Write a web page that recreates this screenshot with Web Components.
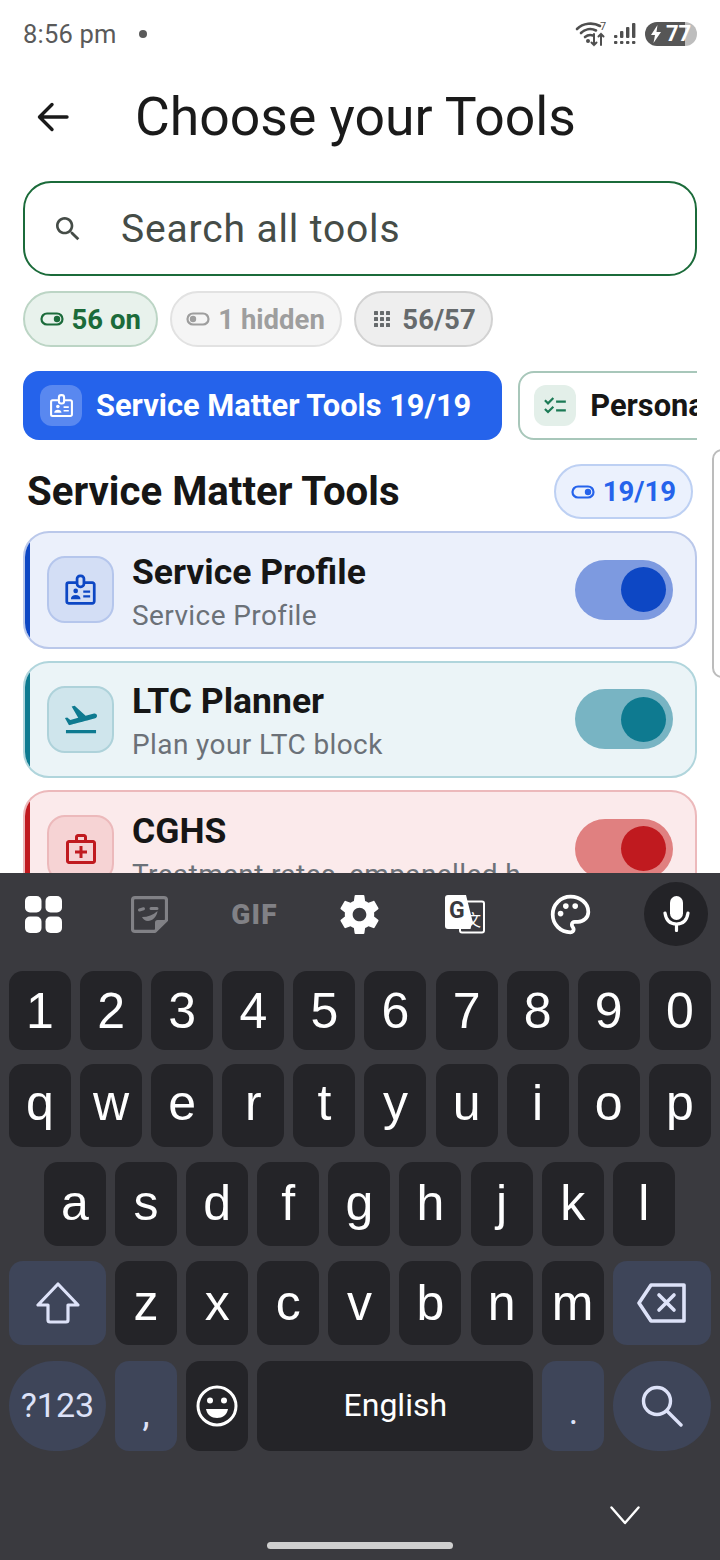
<!DOCTYPE html>
<html lang="en">
<head>
<meta charset="utf-8">
<title>Choose your Tools</title>
<style>
  html,body{margin:0;padding:0;background:#fff;}
  body{width:720px;height:1560px;overflow:hidden;font-family:Roboto,"Liberation Sans",sans-serif;}
</style>
</head>
<body>
<tools-screen></tools-screen>
<script>
  // material icon paths, 24 grid
  const ICONS = {
    flight:'<path fill="currentColor" d="M2.5 19h19v2h-19v-2zm19.57-9.36c-.21-.8-1.04-1.28-1.84-1.06L14.92 10l-6.9-6.43-1.93.51 4.14 7.17-4.97 1.33-1.97-1.54-1.45.39 2.59 4.49s7.12-1.9 16.57-4.43c.81-.23 1.28-1.05 1.07-1.85z"/>',
    medical:'<path fill="currentColor" d="M20 6h-4V4c0-1.1-.9-2-2-2h-4c-1.1 0-2 .9-2 2v2H4c-1.1 0-2 .9-2 2v12c0 1.1.9 2 2 2h16c1.1 0 2-.9 2-2V8c0-1.1-.9-2-2-2zM10 4h4v2h-4V4zm10 16H4V8h16v12z"/><path fill="currentColor" d="M13 10h-2v3H8v2h3v3h2v-3h3v-2h-3z"/>',
    checklist:'<path fill="currentColor" d="M22 7h-9v2h9V7zm0 8h-9v2h9v-2zM5.54 11 2 7.46l1.41-1.41 2.12 2.12 4.24-4.24 1.41 1.41L5.54 11zm0 8L2 15.46l1.41-1.41 2.12 2.12 4.24-4.24 1.41 1.41L5.54 19z"/>',
    badge:'<path fill="none" stroke="currentColor" stroke-width="2" stroke-linejoin="round" d="M9.5 7H3.4A1.4 1.4 0 0 0 2 8.4v12.2A1.4 1.4 0 0 0 3.4 22h17.2a1.4 1.4 0 0 0 1.4-1.4V8.4A1.4 1.4 0 0 0 20.600 7H14.500"/><rect x="9.500" y="2" width="5" height="8" rx="2.200" fill="none" stroke="currentColor" stroke-width="2"/><circle cx="8.500" cy="13" r="1.700" fill="currentColor"/><path fill="currentColor" d="M5 19c0-2 1.600-3 3.500-3s3.500 1 3.500 3z"/><path stroke="currentColor" stroke-width="1.600" d="M14 13.500h5M14 17h5"/>',
    search:'<path fill="currentColor" d="M15.5 14h-.79l-.28-.27C15.41 12.59 16 11.11 16 9.5 16 5.91 13.09 3 9.5 3S3 5.91 3 9.5 5.91 16 9.5 16c1.61 0 3.09-.59 4.23-1.57l.27.28v.79l5 4.99L20.49 19l-4.99-5zm-6 0C7.01 14 5 11.99 5 9.5S7.01 5 9.5 5 14 7.01 14 9.5 11.99 14 9.5 14z"/>',
    toggleOn:'<rect x="1.500" y="6.500" width="21" height="11" rx="5.500" fill="none" stroke="currentColor" stroke-width="2.200"/><circle cx="17" cy="12" r="3.200" fill="currentColor"/>',
    toggleOff:'<rect x="1.500" y="6.500" width="21" height="11" rx="5.500" fill="none" stroke="currentColor" stroke-width="2.200"/><circle cx="7" cy="12" r="3.200" fill="currentColor"/>',
    apps:'<g fill="currentColor"><rect x="4" y="4" width="4" height="4" rx=".6"/><rect x="10" y="4" width="4" height="4" rx=".6"/><rect x="16" y="4" width="4" height="4" rx=".6"/><rect x="4" y="10" width="4" height="4" rx=".6"/><rect x="10" y="10" width="4" height="4" rx=".6"/><rect x="16" y="10" width="4" height="4" rx=".6"/><rect x="4" y="16" width="4" height="4" rx=".6"/><rect x="10" y="16" width="4" height="4" rx=".6"/><rect x="16" y="16" width="4" height="4" rx=".6"/></g>'
  };
  const svg = (name,size) => `<svg width="${size}" height="${size}" viewBox="0 0 24 24" style="display:block;flex:none">${ICONS[name]}</svg>`;

  class StatusBar extends HTMLElement{
    constructor(){ super(); this.attachShadow({mode:'open'}); }
    connectedCallback(){
      this.shadowRoot.innerHTML=`
        <style>
          :host{display:flex;align-items:center;height:66px;padding:2px 23px 0 23px;color:#5a5a5a;box-sizing:border-box;}
          .time{font-size:25.500px;letter-spacing:.2px;line-height:64px;}
          .dot{width:8px;height:8px;border-radius:50%;background:#5a5a5a;margin-left:22px;}
          .right{margin-left:auto;display:flex;align-items:center;gap:6px;}
          .batt{width:52px;height:24px;border-radius:12px;overflow:hidden;background:linear-gradient(90deg,#565656 0 40px,#bdbdbd 40px);display:flex;align-items:center;color:#fff;font-weight:700;font-size:22px;margin-left:3px;}
          .batt svg{margin-left:5px;}
          .batt span{margin-left:4px;line-height:24px;}
        </style>
        <span class="time">8:56 pm</span><span class="dot"></span>
        <div class="right">
          <svg width="32" height="28" viewBox="0 0 32 28" fill="none" stroke="#4f4f4f" stroke-linecap="round">
            <path d="M2 9C8 3 18 2 25 6" stroke-width="2.600"/>
            <path d="M6 13c4-4 10-5 15-2.500" stroke-width="2.600"/>
            <path d="M10 17c2.500-2 5-2.500 8-1.500" stroke-width="2.600"/>
            <circle cx="13" cy="21" r="2" fill="#4f4f4f" stroke="none"/>
            <path d="M19 14v11m-2.500-2.500L19 25l2.500-2.500M26 25V14m-2.500 2.500L26 14l2.500 2.500" stroke-width="2"/>
            <text x="25" y="10" font-size="11" fill="#4f4f4f" stroke="none" font-family="Roboto">7</text>
          </svg>
          <svg width="23" height="24" viewBox="0 0 23 24" fill="#4f4f4f">
            <rect x="1" y="13" width="3.400" height="3" rx="1"/><rect x="7" y="9" width="3.400" height="7" rx="1"/><rect x="13" y="5" width="3.400" height="11" rx="1"/><rect x="19" y="1" width="3.400" height="15" rx="1"/>
            <rect x="1" y="19" width="3.400" height="3" rx="1"/><rect x="7" y="19" width="3.400" height="3" rx="1"/><rect x="13" y="19" width="3.400" height="3" rx="1"/><rect x="19" y="19" width="3.400" height="3" rx="1"/>
          </svg>
          <div class="batt">
            <svg width="12" height="18" viewBox="0 0 12 18"><path fill="#fff" d="M7.500 0 1 10h4l-1.500 8L11 7H6.500z"/></svg>
            <span>77</span>
          </div>
        </div>`;
    }
  }

  class AppHeader extends HTMLElement{
    constructor(){ super(); this.attachShadow({mode:'open'}); }
    connectedCallback(){
      this.shadowRoot.innerHTML=`
        <style>
          :host{display:flex;align-items:center;height:102px;box-sizing:border-box;padding-left:36px;color:#1a1a1a;}
          svg{flex:none;margin-right:65px;display:block;}
          h1{margin:0;font-weight:400;font-size:53.500px;line-height:102px;}
        </style>
        <svg width="34" height="32" viewBox="0 0 34 32" fill="none" stroke="#1a1a1a" stroke-width="3.400" stroke-linecap="round" stroke-linejoin="round"><path d="M31 16H4M16 3.500 3.500 16 16 28.500"/></svg>
        <h1><slot></slot></h1>`;
    }
  }

  class SearchBox extends HTMLElement{
    constructor(){ super(); this.attachShadow({mode:'open'}); }
    connectedCallback(){
      this.shadowRoot.innerHTML=`
        <style>
          :host{display:flex;align-items:center;height:95px;margin:13px 23px 0;box-sizing:border-box;border:2.500px solid #1b6b3a;border-radius:28px;background:#fff;color:#454c47;padding-left:27px;}
          span{font-size:39px;margin-left:37px;letter-spacing:.85px;}
        </style>
        ${svg('search',32)}
        <span>${this.getAttribute('placeholder')}</span>`;
    }
  }

  class StatChip extends HTMLElement{
    constructor(){ super(); this.attachShadow({mode:'open'}); }
    connectedCallback(){
      this.shadowRoot.innerHTML=`
        <style>
          :host{display:inline-flex;align-items:center;gap:8px;height:56px;box-sizing:border-box;border:2px solid var(--line);border-radius:28px;background:var(--bg);color:var(--fg);font-weight:700;font-size:27.500px;padding:0 15px 0 14.500px;white-space:nowrap;}
        </style>
        ${svg(this.getAttribute('icon'),24)}
        <span><slot></slot></span>`;
    }
  }

  class CategoryTab extends HTMLElement{
    constructor(){ super(); this.attachShadow({mode:'open'}); }
    connectedCallback(){
      const on = this.hasAttribute('active');
      this.shadowRoot.innerHTML=`
        <style>
          :host{flex:none;display:flex;align-items:center;gap:14px;height:69px;box-sizing:border-box;border-radius:16px;padding:0 ${on?'31px':'20px'} 0 ${on?'17px':'14px'};white-space:nowrap;font-weight:700;font-size:30.800px;
            background:${on?'#2563eb':'#fff'};color:${on?'#fff':'#161616'};border:${on?'0':'2px solid #a8c7ba'};}
          .tile{width:42px;height:41px;border-radius:12px;display:flex;align-items:center;justify-content:center;background:${on?'rgba(255,255,255,.24)':'#e3efe9'};color:${on?'#fff':'#1b7a55'};}
        </style>
        <div class="tile">${svg(this.getAttribute('icon'),on?25:26)}</div>
        <span><slot></slot></span>`;
    }
  }

  class SectionHead extends HTMLElement{
    constructor(){ super(); this.attachShadow({mode:'open'}); }
    connectedCallback(){
      this.shadowRoot.innerHTML=`
        <style>
          :host{display:flex;align-items:center;justify-content:space-between;height:55px;margin:24px 27px 0;color:#161616;}
          h2{margin:0;font-size:40.200px;font-weight:700;}
          stat-chip{--bg:#ebf1fd;--line:#bdd0f3;--fg:#2563eb;height:55px;}
        </style>
        <h2><slot></slot></h2>
        <stat-chip icon="toggleOn">${this.getAttribute('count')}</stat-chip>`;
    }
  }

  class ToolToggle extends HTMLElement{
    constructor(){ super(); this.attachShadow({mode:'open'}); }
    connectedCallback(){
      this.shadowRoot.innerHTML=`
        <style>
          :host{flex:none;display:flex;align-items:center;justify-content:flex-end;width:98px;height:60px;box-sizing:border-box;padding-right:7.500px;border-radius:30px;background:var(--track);}
          i{display:block;width:45px;height:45px;border-radius:50%;background:var(--accent);}
        </style>
        <i></i>`;
    }
  }

  class ToolCard extends HTMLElement{
    constructor(){ super(); this.attachShadow({mode:'open'}); }
    connectedCallback(){
      this.shadowRoot.innerHTML=`
        <style>
          :host{display:flex;align-items:center;height:117.500px;box-sizing:border-box;margin:0 23px;border:2px solid var(--line);border-radius:26px;background:var(--bg);padding-right:22px;overflow:hidden;}
          .bar{flex:none;align-self:stretch;width:5px;margin:8px 0;background:var(--accent);}
          .tile{flex:none;width:67px;height:67px;box-sizing:border-box;margin-left:17px;border:2px solid var(--tile-line);border-radius:18px;background:var(--tile);color:var(--accent);display:flex;align-items:center;justify-content:center;}
          .txt{flex:1;min-width:0;margin-left:18px;padding-top:6px;}
          .name{font-size:35.500px;font-weight:700;line-height:40px;color:#161616;}
          .sub{font-size:28px;line-height:36px;margin-top:6px;color:#6b7178;white-space:nowrap;overflow:hidden;text-overflow:ellipsis;margin-right:30px;letter-spacing:.4px;}
        </style>
        <div class="bar"></div>
        <div class="tile">${svg(this.getAttribute('icon'),this.getAttribute('size')||36)}</div>
        <div class="txt">
          <div class="name">${this.getAttribute('name')}</div>
          <div class="sub">${this.getAttribute('sub')}</div>
        </div>
        <tool-toggle></tool-toggle>`;
    }
  }

  class KbKey extends HTMLElement{
    constructor(){ super(); this.attachShadow({mode:'open'}); }
    connectedCallback(){
      const kind = this.getAttribute('kind') || '';
      const w = this.getAttribute('w') || 62;
      const fn = kind=='fn' || kind=='round';
      const letter = !this.hasAttribute('fs');
      this.shadowRoot.innerHTML=`
        <style>
          :host{flex:0 0 ${w}px;display:flex;align-items:center;justify-content:center;box-sizing:border-box;border-radius:${kind=='round'?'50px':'14px'};background:${fn?'#3e4559':'#242428'};color:${fn?'#dde2f8':'#fff'};font-size:${this.getAttribute('fs')||50}px;font-family:${letter?'"Liberation Sans"':'Roboto'},sans-serif;padding-bottom:${this.getAttribute('pb')||0}px;padding-top:${this.getAttribute('pt')||0}px;}
        </style>
        <slot></slot>`;
    }
  }

  class KbRow extends HTMLElement{
    constructor(){ super(); this.attachShadow({mode:'open'}); }
    connectedCallback(){
      this.shadowRoot.innerHTML=`
        <style>:host{display:flex;gap:9.100px;height:${this.getAttribute('h')}px;margin-top:${this.getAttribute('top')}px;padding-left:${this.getAttribute('pl')||9}px;}</style>
        <slot></slot>`;
    }
  }

  class KbToolbar extends HTMLElement{
    constructor(){ super(); this.attachShadow({mode:'open'}); }
    connectedCallback(){
      this.shadowRoot.innerHTML=`
        <style>
          :host{display:grid;grid-template-columns:repeat(7,105.400px);align-items:center;justify-items:center;height:82px;margin-left:-9px;width:738px;box-sizing:border-box;}
          .gif{font-family:Roboto,sans-serif;font-weight:900;font-size:28px;letter-spacing:1.200px;color:#818186;}
          .mic{width:64px;height:64px;border-radius:50%;background:#232327;display:flex;align-items:center;justify-content:center;}
        </style>
        <svg width="37" height="37" viewBox="0 0 37 37" fill="#fff"><rect x="0" y="0" width="16.500" height="16.500" rx="5"/><rect x="20.500" y="0" width="16.500" height="16.500" rx="5"/><rect x="0" y="20.500" width="16.500" height="16.500" rx="5"/><rect x="20.500" y="20.500" width="16.500" height="16.500" rx="5"/></svg>
        <svg width="37" height="37" viewBox="0 0 37 37" fill="none" stroke="#818186" stroke-width="3.200" stroke-linejoin="round"><path d="M4 1.600h29a2.500 2.500 0 0 1 2.500 2.500v20L24 35.400H4a2.500 2.500 0 0 1-2.500-2.500V4A2.500 2.500 0 0 1 4 1.600z"/><path fill="#818186" stroke="none" d="M35.500 24 24 35.400V26.500a2.500 2.500 0 0 1 2.500-2.500z"/><path stroke-linecap="round" stroke-width="3" d="M8.500 14l4-1.200M20 12.500h6"/><path fill="#818186" stroke="none" d="M11 21c6 0 11-2 15.500-6C26 21 21 25 17 25c-3 0-5-2-6-4z"/></svg>
        <span class="gif">GIF</span>
        <svg width="47" height="47" viewBox="0 0 24 24" fill="#fff"><path d="M19.430 12.980c.04-.32.07-.64.07-.98s-.03-.66-.07-.98l2.110-1.650c.19-.15.240-.42.120-.64l-2-3.460c-.12-.22-.39-.3-.61-.22l-2.490 1c-.52-.4-1.080-.73-1.690-.98l-.38-2.650C14.460 2.180 14.250 2 14 2h-4c-.25 0-.46.18-.49.42l-.38 2.650c-.61.25-1.170.59-1.690.98l-2.490-1c-.23-.09-.49 0-.61.22l-2 3.460c-.13.22-.07.490.12.640l2.110 1.650c-.04.32-.07.650-.07.980s.03.660.07.980l-2.110 1.650c-.19.150-.24.420-.12.640l2 3.460c.12.220.39.300.61.220l2.490-1c.52.400 1.080.730 1.690.980l.38 2.650c.03.240.24.420.49.420h4c.25 0 .46-.18.49-.42l.38-2.650c.61-.25 1.170-.59 1.690-.98l2.490 1c.23.090.49 0 .61-.22l2-3.460c.12-.22.07-.49-.12-.64l-2.110-1.650zM12 15.500c-1.930 0-3.500-1.570-3.500-3.500s1.570-3.500 3.500-3.500 3.500 1.570 3.500 3.500-1.570 3.500-3.500 3.500z"/></svg>
        <svg width="40" height="39" viewBox="0 0 40 39"><rect x="15" y="6.500" width="24" height="31" rx="2" fill="none" stroke="#fff" stroke-width="2"/><path fill="#fff" d="M3 0h18l6.500 26-2 8H3a3 3 0 0 1-3-3V3a3 3 0 0 1 3-3z"/><text x="4" y="23" font-size="23" font-weight="700" font-family="Roboto" fill="#3a3a3f">G</text><text x="20" y="31" font-size="16" font-family="'Noto Sans CJK SC',sans-serif" fill="#fff">文</text></svg>
        <svg width="45" height="45" viewBox="0 0 24 24"><path fill="none" stroke="#fff" stroke-width="2" stroke-linejoin="round" d="M12 2.500C6.700 2.500 2.500 6.700 2.500 12s4.200 9.500 9.500 9.500c1 0 1.700-.7 1.700-1.600 0-.5-.2-.8-.5-1.200-.3-.4-.5-.7-.5-1.200 0-.9.700-1.600 1.600-1.600H16c3 0 5.500-2.400 5.500-5.300 0-4.600-4.300-8.100-9.500-8.100z"/><g fill="#fff"><circle cx="6.700" cy="11.500" r="1.500"/><circle cx="9.500" cy="7.500" r="1.500"/><circle cx="14.500" cy="7.500" r="1.500"/></g></svg>
        <div class="mic"><svg width="27" height="36" viewBox="0 0 27 36" fill="none" stroke="#fff" stroke-width="3.200" stroke-linecap="round"><rect x="7" y="0" width="13" height="24" rx="6.500" fill="#fff" stroke="none"/><path d="M2 17c1 7 5 11 11.500 11S24 24 25 17M13.500 28v6.500"/></svg></div>`;
    }
  }

  class AppKeyboard extends HTMLElement{
    constructor(){ super(); this.attachShadow({mode:'open'}); }
    connectedCallback(){
      const keys = (s,pb) => [...s].map(c=>`<kb-key pb="${pb}">${c}</kb-key>`).join('');
      this.shadowRoot.innerHTML=`
        <style>
          :host{display:block;position:relative;height:687px;background:#3a3a3f;overflow:hidden;}
          .home{position:absolute;left:267px;top:669px;width:186px;height:7px;border-radius:4px;background:#cfcfcf;}
          .hide{position:absolute;left:610px;top:633px;}
        </style>
        <kb-toolbar></kb-toolbar>
        <kb-row h="79" top="16">${keys('1234567890',0)}</kb-row>
        <kb-row h="83" top="14">${keys('qwertyuiop',6)}</kb-row>
        <kb-row h="84" top="15" pl="44">${keys('asdfghjkl',3)}</kb-row>
        <kb-row h="84" top="15">
          <kb-key kind="fn" w="97"><svg width="44" height="42" viewBox="0 0 44 42" fill="none" stroke="#dde2f8" stroke-width="3.200" stroke-linejoin="round"><path d="M22 2 2 23h10v15a2 2 0 0 0 2 2h16a2 2 0 0 0 2-2V23h10z"/></svg></kb-key>
          ${keys('zxcvbnm',0)}
          <kb-key kind="fn" w="98"><svg width="50" height="40" viewBox="0 0 50 40" fill="none" stroke="#dde2f8" stroke-width="3.600" stroke-linejoin="round" stroke-linecap="round"><path d="M14 2h33v36H14L2 20z"/><path d="M22 12l15 15M37 12 22 27"/></svg></kb-key>
        </kb-row>
        <kb-row h="90" top="16">
          <kb-key kind="round" w="97" fs="34" pb="2">?123</kb-key>
          <kb-key kind="fn" w="62" fs="36" pt="16">,</kb-key>
          <kb-key><svg width="42" height="42" viewBox="0 0 42 42"><circle cx="21" cy="21" r="19" fill="none" stroke="#fff" stroke-width="3"/><circle cx="14" cy="15.500" r="3" fill="#fff"/><circle cx="28" cy="15.500" r="3" fill="#fff"/><path fill="#fff" d="M10 24h22c-1 6-5.500 9-11 9s-10-3-11-9z"/></svg></kb-key>
          <kb-key w="276" fs="32" pb="2">English</kb-key>
          <kb-key kind="fn" w="62" fs="36" pt="11">.</kb-key>
          <kb-key kind="round" w="98"><svg width="42" height="42" viewBox="0 0 42 42" fill="none" stroke="#dde2f8" stroke-width="3.400" stroke-linecap="round"><circle cx="16" cy="16" r="13.500"/><path d="M26 26l14 14"/></svg></kb-key>
        </kb-row>
        <svg class="hide" width="30" height="19" viewBox="0 0 30 19" fill="none" stroke="#fff" stroke-width="2.400" stroke-linecap="round" stroke-linejoin="round"><path d="M1.500 1.500 15 17 28.500 1.500"/></svg>
        <div class="home"></div>`;
    }
  }

  class ToolsScreen extends HTMLElement{
    constructor(){ super(); this.attachShadow({mode:'open'}); }
    connectedCallback(){
      this.shadowRoot.innerHTML=`
        <style>
          :host{display:flex;flex-direction:column;width:720px;height:1560px;background:#fff;font-family:Roboto,"Liberation Sans",sans-serif;}
          main{position:relative;flex:0 0 873px;height:873px;overflow:hidden;}
          .chips{display:flex;gap:12px;margin:15px 23px 0;}
          .tabs{display:flex;gap:16px;margin:24px 23px 0;overflow:hidden;}
          .list{display:flex;flex-direction:column;gap:12px;margin-top:12px;}
          .peek{position:absolute;right:-16px;top:449px;width:20px;height:225px;border:2px solid #bcbcbc;border-radius:10px;background:#fff;}
          .blue{--bg:#ebf0fb;--line:#bac8ea;--accent:#0d47c4;--tile:#d3def5;--tile-line:#b5c6ec;--track:#7d9ae0;}
          .teal{--bg:#ebf4f7;--line:#b0d5dc;--accent:#0e7a90;--tile:#cfe5ec;--tile-line:#aed2da;--track:#78b4c3;}
          .red{--bg:#fbeaeb;--line:#ecb9bb;--accent:#c01a1f;--tile:#f6d3d4;--tile-line:#ecb9bb;--track:#e08080;}
          .c1{--bg:#e8f2ec;--line:#bcd5c5;--fg:#1b6b3a;}
          .c2{--bg:#f5f5f5;--line:#e2e2e2;--fg:#9e9e9e;}
          .c3{--bg:#eeeeee;--line:#d2d2d2;--fg:#666a6c;}
        </style>
        <main>
          <status-bar></status-bar>
          <app-header>Choose your Tools</app-header>
          <search-box placeholder="Search all tools"></search-box>
          <div class="chips">
            <stat-chip class="c1" icon="toggleOn">56 on</stat-chip>
            <stat-chip class="c2" icon="toggleOff">1 hidden</stat-chip>
            <stat-chip class="c3" icon="apps">56/57</stat-chip>
          </div>
          <div class="tabs">
            <category-tab active icon="badge">Service Matter Tools 19/19</category-tab>
            <category-tab icon="checklist">Personal Tools</category-tab>
          </div>
          <section-head count="19/19">Service Matter Tools</section-head>
          <div class="list">
            <tool-card class="blue" icon="badge" size="33" name="Service Profile" sub="Service Profile"></tool-card>
            <tool-card class="teal" icon="flight" size="38" name="LTC Planner" sub="Plan your LTC block"></tool-card>
            <tool-card class="red" icon="medical" name="CGHS" sub="Treatment rates, empanelled hospitals"></tool-card>
          </div>
          <div class="peek"></div>
        </main>
        <app-keyboard></app-keyboard>`;
    }
  }

  customElements.define('status-bar',StatusBar);
  customElements.define('app-header',AppHeader);
  customElements.define('search-box',SearchBox);
  customElements.define('stat-chip',StatChip);
  customElements.define('category-tab',CategoryTab);
  customElements.define('section-head',SectionHead);
  customElements.define('tool-toggle',ToolToggle);
  customElements.define('tool-card',ToolCard);
  customElements.define('kb-key',KbKey);
  customElements.define('kb-row',KbRow);
  customElements.define('kb-toolbar',KbToolbar);
  customElements.define('app-keyboard',AppKeyboard);
  customElements.define('tools-screen',ToolsScreen);
</script>
</body>
</html>
